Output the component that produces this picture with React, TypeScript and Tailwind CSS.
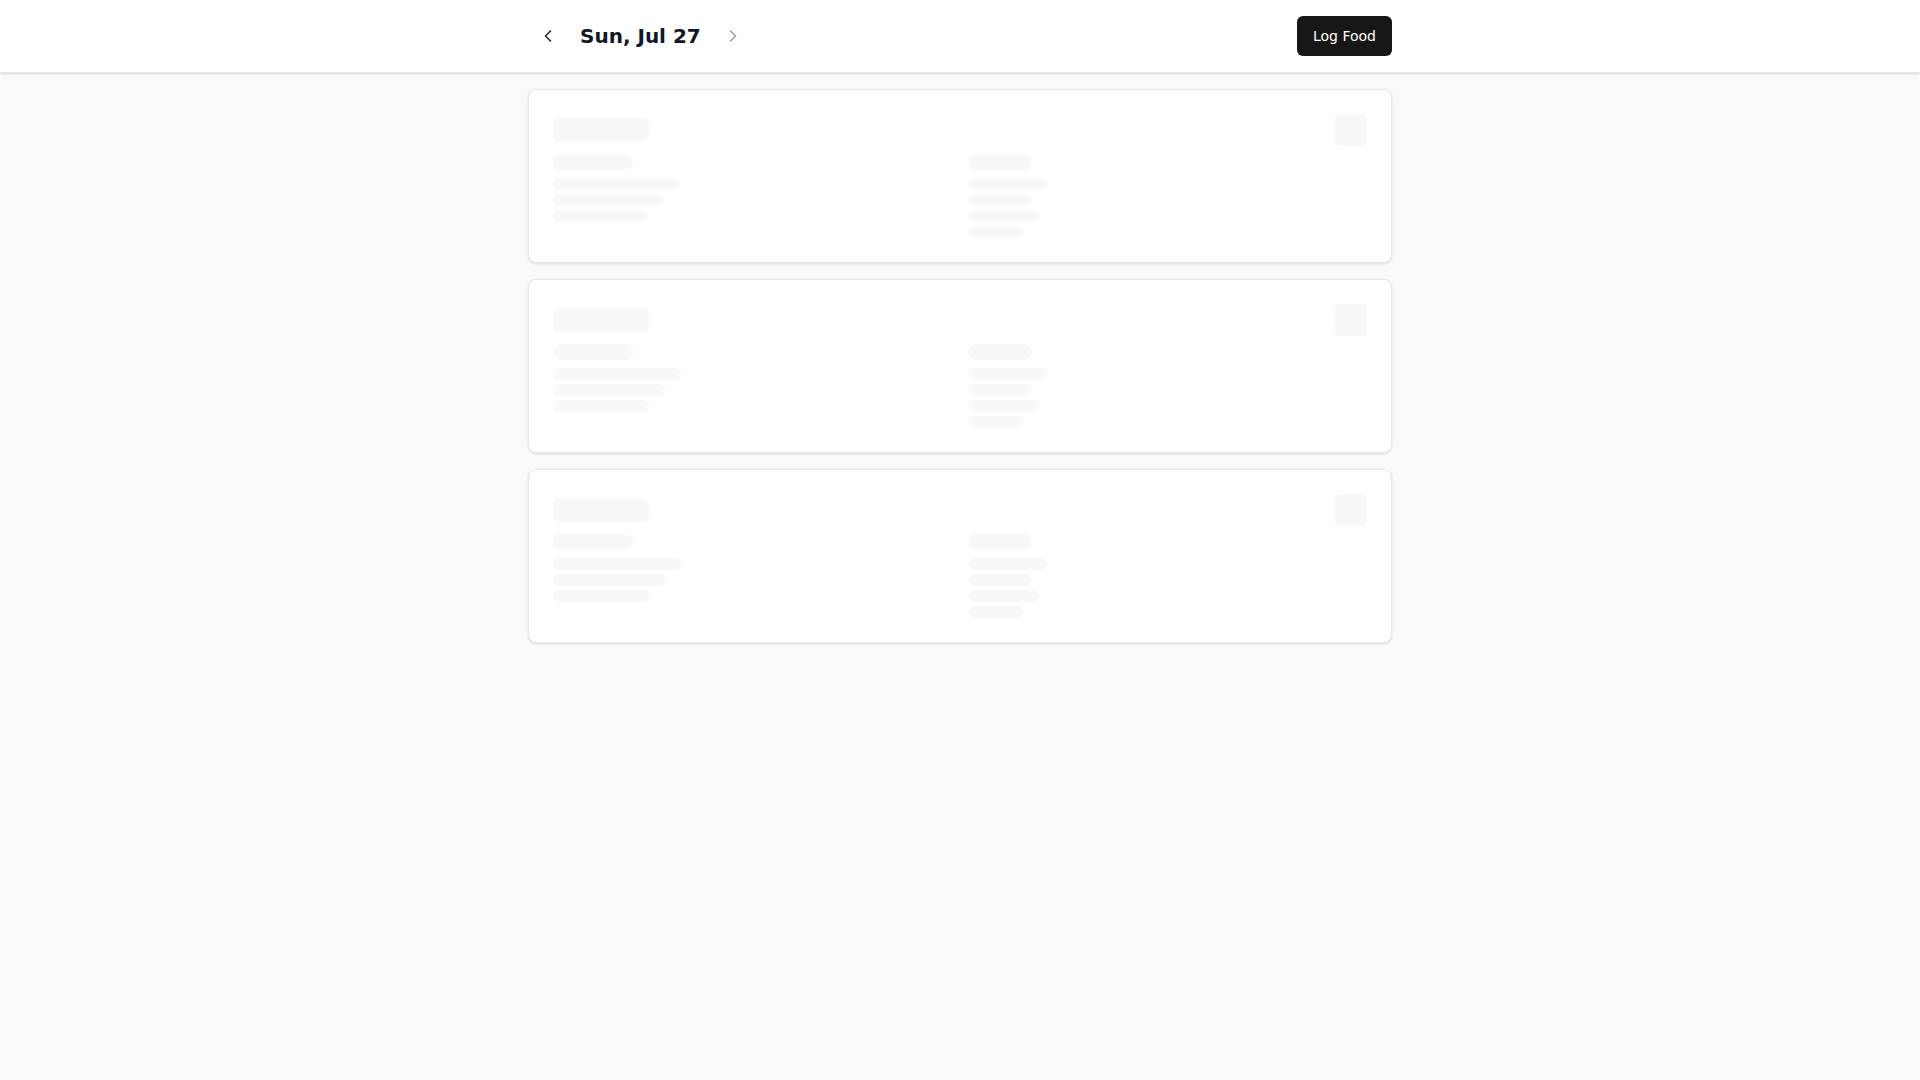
import { ChevronLeft, ChevronRight } from "lucide-react";

const LEFT_LINES = ["w-32", "w-28", "w-24"];
const RIGHT_LINES = ["w-20", "w-16", "w-[72px]", "w-14"];

function SkeletonCard() {
  return (
    <div className="rounded-lg border border-gray-200 bg-white p-6 shadow-sm">
      <div className="flex items-center justify-between">
        <div className="h-6 w-24 rounded-md bg-[#f8f8f8]" />
        <div className="h-8 w-8 rounded bg-[#f8f8f8]" />
      </div>
      <div className="mt-2 grid grid-cols-2 gap-4">
        <div>
          <div className="h-4 w-20 rounded-lg bg-[#f8f8f8]" />
          <div className="mt-2 space-y-1">
            {LEFT_LINES.map((w) => (
              <div key={w} className={`h-3 rounded-full bg-[#f8f8f8] ${w}`} />
            ))}
          </div>
        </div>
        <div>
          <div className="h-4 w-16 rounded-lg bg-[#f8f8f8]" />
          <div className="mt-2 space-y-1">
            {RIGHT_LINES.map((w) => (
              <div key={w} className={`h-3 rounded-full bg-[#f8f8f8] ${w}`} />
            ))}
          </div>
        </div>
      </div>
    </div>
  );
}

export default function App() {
  return (
    <div className="min-h-screen bg-gray-50 font-['DejaVu_Sans',sans-serif]">
      {/* Top bar with date navigation */}
      <header className="border-b border-gray-200 bg-white shadow-sm">
        <div className="mx-auto flex max-w-4xl items-center justify-between px-4 py-4">
          <div className="flex items-center gap-3">
            <button
              type="button"
              className="rounded-md p-2.5 text-gray-800"
              aria-label="Previous day"
            >
              <ChevronLeft className="h-5 w-5" />
            </button>
            <h1 className="text-xl font-bold text-gray-900">Sun, Jul 27</h1>
            <button
              type="button"
              disabled
              className="rounded-md p-2.5 text-gray-400"
              aria-label="Next day"
            >
              <ChevronRight className="h-5 w-5" />
            </button>
          </div>
          <button
            type="button"
            className="h-10 rounded-md bg-[#171717] px-4 text-sm text-white"
          >
            Log Food
          </button>
        </div>
      </header>

      {/* Loading placeholders */}
      <main className="mx-auto max-w-4xl space-y-4 px-4 py-4">
        <SkeletonCard />
        <SkeletonCard />
        <SkeletonCard />
      </main>
    </div>
  );
}
